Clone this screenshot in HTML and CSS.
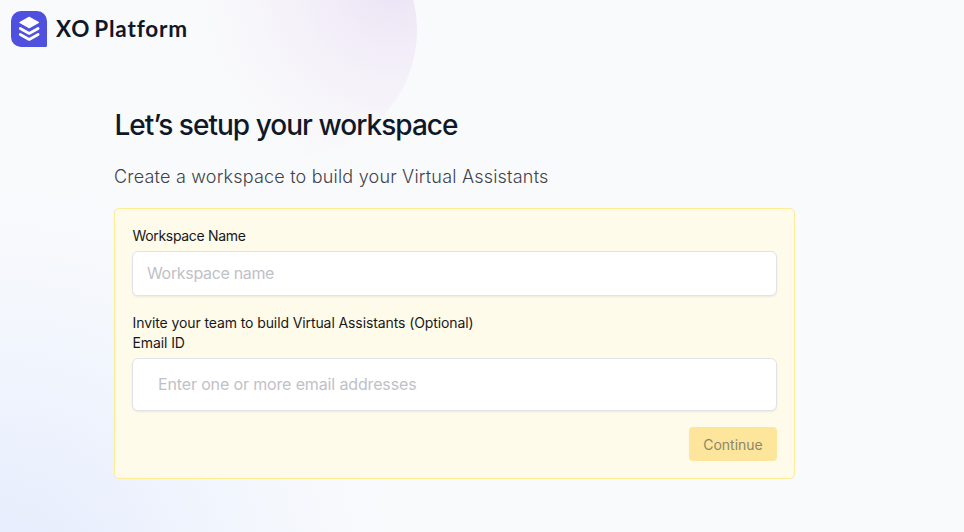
FILE: index.html
```html
<!DOCTYPE html>
<html lang="en">
<head>
<meta charset="utf-8">
<title>XO Platform</title>
<link rel="stylesheet" href="styles.css">
</head>
<body>
<div class="page">
  <header class="brand">
    <svg class="logo" viewBox="0 0 36 36" aria-hidden="true">
      <path d="M10 0H26A10 10 0 0 1 36 10V34.500A1.500 1.500 0 0 1 34.500 36H10A10 10 0 0 1 0 26V10A10 10 0 0 1 10 0Z" fill="#4f4fe0"/>
      <path d="M18.200 6.400L27.500 11.500L18.200 16.600L8.900 11.500Z" fill="#fff" stroke="#fff" stroke-width="1.200" stroke-linejoin="round"/>
      <path d="M9.300 17.500L18.200 22.400L27.100 17.500M9.300 23.500L18.200 28.400L27.100 23.500" fill="none" stroke="#fff" stroke-width="2.800" stroke-linecap="round" stroke-linejoin="round"/>
    </svg>
    <span class="brand-name">XO Platform</span>
  </header>
  <main class="setup">
    <h1 class="title">Let’s setup your workspace</h1>
    <p class="subtitle">Create a workspace to build your Virtual Assistants</p>
    <form class="card">
      <label class="label label-name" for="workspace">Workspace Name</label>
      <input class="input input-name" id="workspace" type="text" placeholder="Workspace name">
      <p class="label invite">Invite your team to build Virtual Assistants (Optional)</p>
      <label class="label" for="email">Email ID</label>
      <input class="input input-email" id="email" type="text" placeholder="Enter one or more email addresses">
      <button class="continue" type="button" disabled>Continue</button>
    </form>
  </main>
</div>
</body>
</html>
```

FILE: styles.css
```css
* { box-sizing: border-box; }
body {
  margin: 0;
  font-family: Inter, "Liberation Sans", sans-serif;
  color: #101828;
}
.page {
  height: 532px;
  overflow: hidden;
  background:
    radial-gradient(circle at 0 580px, #e4ebfc 0, #edf2fd 160px, #f2f6fd 240px, rgba(249, 250, 252, 0) 390px),
    #f9fafc;
  position: relative;
  z-index: 0;
}
.page::before {
  content: "";
  position: absolute;
  z-index: -1;
  left: 165px;
  top: -96px;
  width: 252px;
  height: 252px;
  border-radius: 50%;
  background: radial-gradient(circle at 230px 76px, #ebe2f6 0, #f0eaf7 50px, #f4f1f9 100px, #f8f8fb 165px, #f9fafc 210px);
}
.brand {
  display: flex;
  align-items: center;
  gap: 9px;
  padding: 11px 0 0 11px;
}
.logo { width: 36px; height: 36px; display: block; }
.brand-name {
  font: 700 22.500px/36px Lato, sans-serif;
  letter-spacing: 0.850px;
  word-spacing: -2.500px;
}
.setup { width: 681px; margin: 57px 0 0 114px; }
.title {
  margin: 0;
  padding: 1px 0 0 0.500px;
  height: 40px;
  font-size: 28px;
  line-height: 40px;
  font-weight: 550;
  letter-spacing: -0.970px;
}
.subtitle {
  margin: 20px 0 0;
  font-size: 18px;
  line-height: 26px;
  font-weight: 300;
  letter-spacing: 0.200px;
  color: #3f4249;
}
.card {
  display: flex;
  flex-direction: column;
  height: 271px;
  margin-top: 18px;
  padding: 17px;
  border: 1px solid #feeb94;
  border-radius: 5px;
  background: #fffbea;
}
.label {
  display: block;
  margin: 0;
  padding-left: 0.500px;
  font-size: 14px;
  line-height: 20px;
  letter-spacing: -0.100px;
  color: #17181b;
}
.label-name { letter-spacing: -0.320px; }
.invite { margin-top: 17px; }
.input {
  width: 100%;
  margin: 5px 0 0;
  border: 1px solid #e1e3e8;
  border-radius: 6px;
  background: #fff;
  box-shadow: 0 1px 2px rgba(16, 24, 40, 0.080);
  font: 400 16px/24px Inter, sans-serif;
}
.input::placeholder { color: #bfc1c8; opacity: 1; }
.input-name { height: 45px; padding: 0 14px 2px; letter-spacing: -0.330px; }
.input-email { height: 53px; padding: 0 25px 2px; letter-spacing: -0.140px; }
.continue {
  align-self: flex-end;
  width: 88px;
  height: 34px;
  margin-top: 16px;
  padding: 2px 0 0;
  border: 0;
  border-radius: 4px;
  background: #fde69b;
  color: #8c866c;
  font: 400 14px/20px Inter, sans-serif;
}
```
